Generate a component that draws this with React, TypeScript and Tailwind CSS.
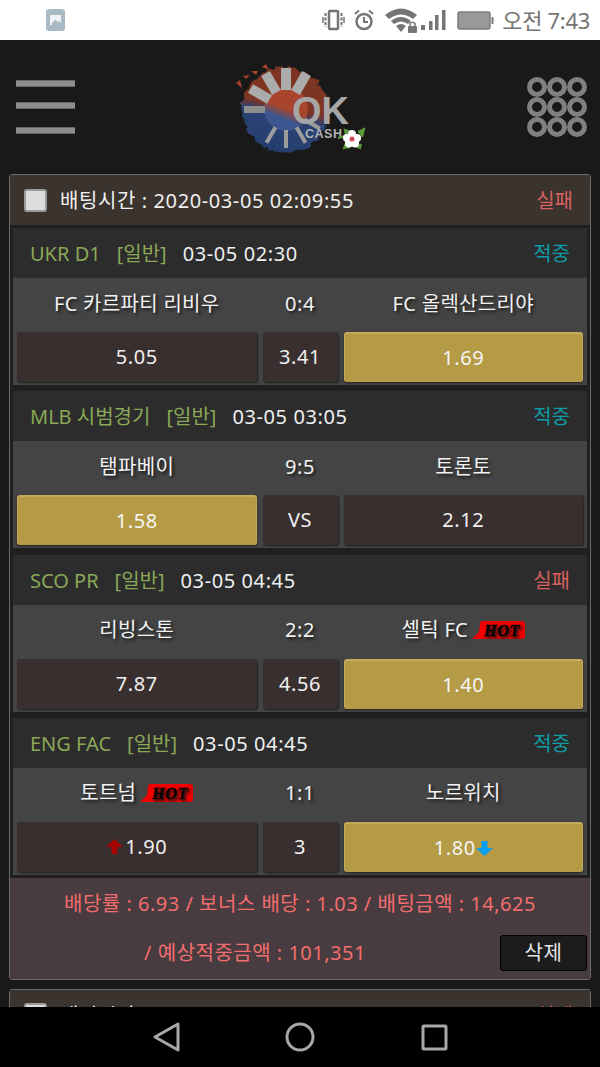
import { ReactNode } from "react";

type Pick = {
  league: string;
  time: string;
  status: "적중" | "실패";
  home: string;
  homeHot?: boolean;
  score: string;
  away: string;
  awayHot?: boolean;
  homeOdds: string;
  midOdds: string;
  awayOdds: string;
  selected: "home" | "away";
  upOnHome?: boolean;
  downOnAway?: boolean;
};

const picks: Pick[] = [
  { league: "UKR D1", time: "03-05 02:30", status: "적중", home: "FC 카르파티 리비우", score: "0:4", away: "FC 올렉산드리야", homeOdds: "5.05", midOdds: "3.41", awayOdds: "1.69", selected: "away" },
  { league: "MLB 시범경기", time: "03-05 03:05", status: "적중", home: "탬파베이", score: "9:5", away: "토론토", homeOdds: "1.58", midOdds: "VS", awayOdds: "2.12", selected: "home" },
  { league: "SCO PR", time: "03-05 04:45", status: "실패", home: "리빙스톤", score: "2:2", away: "셀틱 FC", awayHot: true, homeOdds: "7.87", midOdds: "4.56", awayOdds: "1.40", selected: "away" },
  { league: "ENG FAC", time: "03-05 04:45", status: "적중", home: "토트넘", homeHot: true, score: "1:1", away: "노르위치", homeOdds: "1.90", midOdds: "3", awayOdds: "1.80", selected: "away", upOnHome: true, downOnAway: true },
];

function HotBadge() {
  return (
    <svg width="53" height="18" viewBox="0 0 53 18" className="ml-[4px] shrink-0">
      <path d="M0 18 L7 11 L8 3 Q8 0 11 0 L50 0 Q53 0 53 3 L53 15 Q53 18 50 18 Z" fill="#f00000" />
      <text x="30" y="14.5" textAnchor="middle" fontFamily="Liberation Serif, serif" fontWeight="700" fontStyle="italic" fontSize="16" letterSpacing="0.8" fill="#000" stroke="#000" strokeWidth="0.4">HOT</text>
    </svg>
  );
}

function ArrowUp() {
  return (
    <svg width="17" height="16" viewBox="0 0 17 16" className="shrink-0 mr-[2px]">
      <path d="M8.5 0 L17 8 H11.5 V15 H5.5 V8 H0 Z" fill="#a80404" />
    </svg>
  );
}

function ArrowDown() {
  return (
    <svg width="17" height="16" viewBox="0 0 17 16" className="shrink-0">
      <path d="M5.5 1 H11.5 V8 H17 L8.5 16 L0 8 H5.5 Z" fill="#0b9ff0" />
    </svg>
  );
}

function OddsButton({ on, children }: { on?: boolean; children: ReactNode }) {
  return (
    <div
      className={
        on
          ? "h-[50px] flex items-center justify-center rounded-[3px] bg-[#b59b46] border-t-2 border-l border-r border-[#c4ab5b] text-[#f5f5f5] tracking-[0.6px] shadow-[0_1px_2px_#222]"
          : "h-[50px] flex items-center justify-center rounded-[3px] bg-[#3a2f2f] text-[#f0f0f0] tracking-[0.6px] shadow-[1px_1px_2px_#1c1c1c]"
      }
    >
      {children}
    </div>
  );
}

function MatchRow({ pick }: { pick: Pick }) {
  return (
    <div className="bg-[#444444]">
      <div className="h-[50px] pt-[2px] bg-[#2c2c2c] flex items-center pl-[17px] pr-[17px] whitespace-nowrap">
        <span className="text-[#8aa857]">{pick.league}</span>
        <span className="text-[#8aa857] ml-[16px]">[일반]</span>
        <span className="text-[#f0f0f0] ml-[16px] tracking-[0.6px]">{pick.time}</span>
        <span className={pick.status === "적중" ? "ml-auto text-[#0e9ca6]" : "ml-auto text-[#d9605f]"}>{pick.status}</span>
      </div>
      <div className="px-[4px] pb-[3px]">
        <div className="grid grid-cols-[1fr_75px_1fr] gap-x-[6px] h-[54px] pb-[3px] items-center text-[#f2f2f2] tracking-[0.3px] [text-shadow:2px_2px_3px_#181818]">
          <div className="flex items-center justify-center">
            {pick.home}
            {pick.homeHot && <HotBadge />}
          </div>
          <div className="text-center tracking-[0.6px]">{pick.score}</div>
          <div className="flex items-center justify-center">
            {pick.away}
            {pick.awayHot && <HotBadge />}
          </div>
        </div>
        <div className="grid grid-cols-[1fr_75px_1fr] gap-x-[6px]">
          <OddsButton on={pick.selected === "home"}>
            {pick.upOnHome && <ArrowUp />}
            {pick.homeOdds}
          </OddsButton>
          <OddsButton>{pick.midOdds}</OddsButton>
          <OddsButton on={pick.selected === "away"}>
            {pick.awayOdds}
            {pick.downOnAway && <ArrowDown />}
          </OddsButton>
        </div>
      </div>
    </div>
  );
}

function CardHeader() {
  return (
    <div className="h-[50px] bg-[#3a332e] flex items-center pl-[14px] pr-[17px] whitespace-nowrap">
      <div className="w-[23px] h-[23px] rounded-[3px] bg-[#dddddd] border-2 border-[#9a9a9a]" />
      <span className="ml-[13px] pt-[2px] text-[#f0f0f0] tracking-[0.6px]">배팅시간 : 2020-03-05 02:09:55</span>
      <span className="ml-auto pt-[2px] text-[#d9605f]">실패</span>
    </div>
  );
}

function Logo() {
  const thick = [-60, -30, 0, 30];
  const thin = [120, 150, 180, 210];
  return (
    <svg width="136" height="96" viewBox="230 58 136 96" className="mr-[7px]">
      <defs>
        <filter id="rough" x="-20%" y="-20%" width="140%" height="140%">
          <feTurbulence type="fractalNoise" baseFrequency="0.12" numOctaves="3" seed="4" />
          <feDisplacementMap in="SourceGraphic" scale="9" xChannelSelector="R" yChannelSelector="G" />
        </filter>
        <linearGradient id="sun" x1="0.62" y1="0" x2="0.38" y2="1">
          <stop offset="0.46" stopColor="#7d3424" />
          <stop offset="0.58" stopColor="#2c4474" />
          <stop offset="1" stopColor="#263d6e" />
        </linearGradient>
        <linearGradient id="core" x1="0.7" y1="0" x2="0.3" y2="1">
          <stop offset="0.5" stopColor="#a8452c" />
          <stop offset="0.72" stopColor="#3b5690" />
        </linearGradient>
      </defs>
      <circle cx="285" cy="109" r="43" fill="url(#sun)" filter="url(#rough)" />
      <circle cx="286" cy="108" r="22" fill="url(#core)" />
      <path d="M236 82 l4 -3 l2 8 Z M243 75 l7 -1 l-4 4 Z M251 70 l7 0 l-2 4 Z M262 66 l4 -3 l3 6 Z" fill="#a4432c" />
      <g>
        {thick.map((a) => (
          <rect key={a} x="281" y="67" width="10" height="22" fill="#ababab" transform={`rotate(${a} 286 108)`} />
        ))}
        <rect x="244" y="105" width="21" height="7" fill="#8e8e8e" />
        {thin.map((a) => (
          <rect key={a} x="284" y="69" width="4" height="18" fill="#9c9c9c" transform={`rotate(${a} 286 108)`} />
        ))}
      </g>
      <text x="292" y="123" fontFamily="Liberation Sans, sans-serif" fontWeight="700" fontSize="38" fill="#a6a6a6">OK</text>
      <text x="305" y="137" fontFamily="Liberation Sans, sans-serif" fontWeight="700" fontSize="12.5" letterSpacing="0.5" fill="#b0b0b0">CASH</text>
      <path d="M338 137 L346 135 L345 129 L351 131 M358 131 L364 128 L362 136 M361 143 L360 147 L354 144 M346 142 L344 147 L350 146" fill="#5d9a3c" stroke="#5d9a3c" strokeWidth="2" />
      <g fill="#ffffff">
        <circle cx="352" cy="133" r="4" />
        <circle cx="357" cy="137" r="4" />
        <circle cx="355" cy="142.5" r="4" />
        <circle cx="349" cy="142.5" r="4" />
        <circle cx="347" cy="137" r="4" />
        <circle cx="352" cy="138" r="4" />
      </g>
      <circle cx="352" cy="138" r="2.5" fill="#d04a55" />
    </svg>
  );
}

function Hamburger() {
  return (
    <div className="w-[59px] flex flex-col">
      <div className="h-[7px] bg-[#8e8e8e] border-y border-[#666666]" />
      <div className="h-[7px] mt-[15px] bg-[#8e8e8e] border-y border-[#666666]" />
      <div className="h-[7px] mt-[18px] bg-[#8e8e8e] border-y border-[#666666]" />
    </div>
  );
}

function AppsGrid() {
  return (
    <div className="grid grid-cols-3">
      {Array.from({ length: 9 }).map((_, i) => (
        <div key={i} className="w-[20px] h-[20px] rounded-full border-[5px] border-[#808080]" />
      ))}
    </div>
  );
}

function StatusBar() {
  return (
    <div className="h-[40px] bg-white flex items-center pl-[46px] pr-[10px] shrink-0">
      <svg width="19" height="22" viewBox="0 0 19 22">
        <rect width="19" height="22" rx="3" fill="#a9bac5" />
        <path d="M4 6 H15 V16 H4 Z" fill="#eef2f4" />
        <path d="M6 14 L9.5 10.5 L12 13 L13 12 L15 14 V16 H6 Z" fill="#a9bac5" />
      </svg>
      <div className="ml-auto flex items-center">
        <svg width="23" height="22" viewBox="0 0 23 22" fill="none" stroke="#757575" strokeWidth="2">
          <rect x="7" y="2" width="9" height="18" rx="1" strokeWidth="2.5" />
          <path d="M3.5 4 V18 M19.5 4 V18" strokeDasharray="3 1.5" />
          <path d="M1 8 V14 M22 8 V14" strokeWidth="1.5" />
        </svg>
        <svg width="22" height="22" viewBox="0 0 22 22" fill="none" stroke="#757575" className="ml-[8px]">
          <circle cx="11" cy="12.5" r="7.5" strokeWidth="2.5" />
          <path d="M11 8 V13 H15" strokeWidth="2" />
          <path d="M2 5 L6 1.5 M20 5 L16 1.5" strokeWidth="2" />
        </svg>
        <svg width="33" height="26" viewBox="0 0 33 26" className="ml-[10px]">
          <path d="M0 8 Q16 -5 32 8 L28 12 Q16 3 4 12 Z" fill="#757575" />
          <path d="M6 14 Q16 6 26 14 L23 17 Q16 12 9 17 Z" fill="#757575" />
          <path d="M11 19 Q16 15 21 19 L16 25 Z" fill="#757575" />
          <rect x="23" y="19" width="9" height="7" rx="1" fill="#757575" />
          <path d="M25 19 V16.5 Q27.5 14 30 16.5 V19" fill="none" stroke="#757575" strokeWidth="1.5" />
        </svg>
        <svg width="25" height="22" viewBox="0 0 25 22" fill="#757575" className="ml-[3px]">
          <rect x="0" y="16" width="4" height="5" />
          <rect x="8" y="12" width="3.5" height="9" />
          <rect x="14" y="6" width="3.5" height="15" />
          <rect x="21" y="1" width="3.5" height="20" />
        </svg>
        <svg width="37" height="19" viewBox="0 0 37 19" className="ml-[11px]">
          <rect x="1" y="1" width="32" height="17" rx="2" fill="#999999" stroke="#7c7c7c" strokeWidth="1.5" />
          <rect x="34.5" y="6" width="2" height="7" fill="#7c7c7c" />
        </svg>
        <span className="ml-[8px] text-[22px] leading-none text-[#757575] tracking-[-0.3px]">오전 7:43</span>
      </div>
    </div>
  );
}

function NavBar() {
  return (
    <div className="h-[60px] bg-black shrink-0 flex items-center justify-center">
      <svg width="32" height="32" viewBox="0 0 32 32" fill="none" stroke="#a8a8a8" strokeWidth="3" strokeLinejoin="round" className="mr-[104px] ml-[-3px]">
        <path d="M29 3 V29 L6 16 Z" />
      </svg>
      <svg width="30" height="30" viewBox="0 0 30 30" fill="none" stroke="#a8a8a8" strokeWidth="3">
        <circle cx="15" cy="15" r="13" />
      </svg>
      <svg width="27" height="27" viewBox="0 0 27 27" fill="none" stroke="#a8a8a8" strokeWidth="3" strokeLinejoin="round" className="ml-[106px]">
        <rect x="2" y="2" width="23" height="23" rx="1" />
      </svg>
    </div>
  );
}

export default function App() {
  return (
    <div className="h-screen w-full flex flex-col overflow-hidden bg-[#191919] text-[20px] font-['Noto_Sans','Noto_Sans_CJK_KR',sans-serif]">
      <StatusBar />
      <div className="flex-1 overflow-hidden">
        <header className="h-[134px] flex items-center justify-between pl-[16px] pr-[13px]">
          <Hamburger />
          <Logo />
          <AppsGrid />
        </header>
        <div className="px-[9px] flex flex-col gap-[9px]">
          <div className="border border-[#6a6a6a] rounded-[3px] bg-[#1f1f1f]">
            <CardHeader />
            <div className="px-[3px] pt-[3px] flex flex-col gap-[6.33px]">
              {picks.map((p) => (
                <MatchRow key={p.league} pick={p} />
              ))}
            </div>
            <div className="mt-[3px] bg-[#483c40] text-[#f26d6d] tracking-[0.5px]">
              <div className="h-[52px] flex items-center justify-center">배당률 : 6.93 / 보너스 배당 : 1.03 / 배팅금액 : 14,625</div>
              <div className="h-[49px] pb-[2px] flex items-center pr-[3px]">
                <div className="flex-1 text-center">/ 예상적중금액 : 101,351</div>
                <button className="w-[87px] h-[36px] rounded-[3px] bg-[#1c1c1c] border border-black text-[#e4e4e4]">삭제</button>
              </div>
            </div>
          </div>
          <div className="border border-[#6a6a6a] rounded-[3px]">
            <CardHeader />
          </div>
        </div>
      </div>
      <NavBar />
    </div>
  );
}
